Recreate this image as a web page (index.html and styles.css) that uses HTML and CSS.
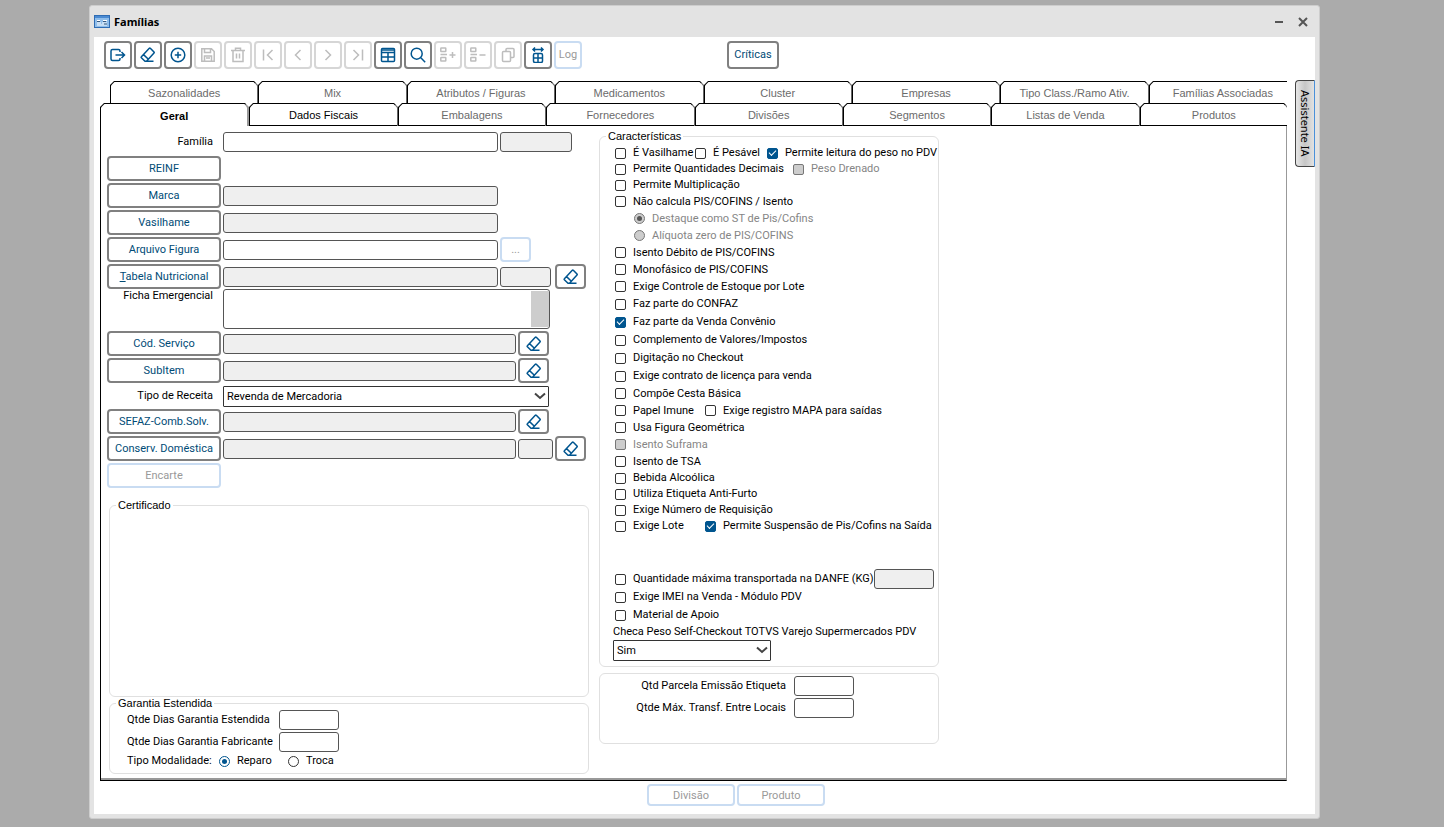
FILE: index.html
```html
<!DOCTYPE html>
<html lang="pt-BR">
<head>
<meta charset="utf-8">
<title>Famílias</title>
<meta name="viewport" content="width=device-width, initial-scale=1">
<link rel="stylesheet" href="styles.css">
</head>
<body>
<svg class="defs" width="0" height="0" aria-hidden="true">
  <symbol id="i-exit" viewBox="0 0 16 16"><path d="M10 5V4Q10 2.500 8.500 2.500H2.500Q1 2.500 1 4V12Q1 13.500 2.500 13.500H8.500Q10 13.500 10 12V11M5.500 8H14.500M11.500 5L14.500 8L11.500 11"/></symbol>
  <symbol id="i-eraser" viewBox="0 0 16 16"><path d="M10.300 1.200L14 5Q14.500 5.500 14 6L6.500 14.300H5L1.400 10.800Q.9 10.200 1.400 9.700L9.300 1.200Q9.800.7 10.300 1.200ZM3.500 7.600L8.400 12.200M5 14.300H13.500"/></symbol>
  <symbol id="i-plus" viewBox="0 0 16 16"><circle cx="8" cy="8" r="6.800"/><path d="M8 4.800V11.200M4.800 8H11.200"/></symbol>
  <symbol id="i-save" viewBox="0 0 16 16"><path d="M1.800 1.800H11.500L14.200 4.500V14.200H1.800ZM4.500 2V5.500H10.500V2M4.500 14V9H11.500V14M6 11H10"/></symbol>
  <symbol id="i-trash" viewBox="0 0 16 16"><path d="M1 3.500H15M5.500 3.200V1.300H10.500V3.200M3 3.800V14.500H13V3.800M6.500 6.500V11.500M9.500 6.500V11.500"/></symbol>
  <symbol id="i-first" viewBox="0 0 16 16"><path d="M3.500 2.500V13.500M12.500 3L7.500 8L12.500 13"/></symbol>
  <symbol id="i-prev" viewBox="0 0 16 16"><path d="M10.500 3L5.500 8L10.500 13"/></symbol>
  <symbol id="i-next" viewBox="0 0 16 16"><path d="M5.500 3L10.500 8L5.500 13"/></symbol>
  <symbol id="i-last" viewBox="0 0 16 16"><path d="M12.500 2.500V13.500M3.500 3L8.500 8L3.500 13"/></symbol>
  <symbol id="i-table" viewBox="0 0 16 16"><rect x="1.500" y="1.500" width="13" height="13" rx="1"/><path d="M1.500 3H14.500M1.500 5.500H14.500M1.500 10H14.500M8 5V14"/></symbol>
  <symbol id="i-search" viewBox="0 0 16 16"><circle cx="6.700" cy="6.700" r="5.500"/><path d="M10.800 10.800L15.200 15.200"/></symbol>
  <symbol id="i-rowadd" viewBox="0 0 16 16"><rect x=".8" y="1" width="5" height="3.500" rx=".5"/><path d="M.5 7.500H7M9.500 8H15.500M12.500 5V11"/><rect x=".8" y="10.500" width="5" height="3.500" rx=".5"/></symbol>
  <symbol id="i-rowdel" viewBox="0 0 16 16"><rect x=".8" y="1" width="5" height="3.500" rx=".5"/><path d="M.5 7.500H7M9.500 8H15.500"/><rect x=".8" y="10.500" width="5" height="3.500" rx=".5"/></symbol>
  <symbol id="i-copy" viewBox="0 0 16 16"><path d="M6 4V2.500Q6 1.500 7 1.500H13Q14 1.500 14 2.500V9.500Q14 10.500 13 10.500H11"/><rect x="2.500" y="4.500" width="8" height="10" rx="1"/></symbol>
  <symbol id="i-fit" viewBox="0 0 16 16"><path d="M3.500 2.500H12.500M5 .5L3 2.500L5 4.500M11 .5L13 2.500L11 4.500"/><rect x="3.500" y="6.500" width="9" height="9" rx="1.500"/><path d="M8 6.500V15.500M3.500 11H12.500"/></symbol>
</svg>

<main class="window">
  <header class="titlebar">
    <svg class="titlebar__icon" viewBox="0 0 16 13" aria-hidden="true">
      <rect x=".5" y=".5" width="15" height="12" fill="#8fbdea" stroke="#2f6cb3"/>
      <path d="M1 2H15" stroke="#4a8ad2" stroke-width="2"/>
      <path d="M3 5.500H6M3 8H7M9 5.500H13M8 8H13M3 10H13" stroke="#fff"/>
      <path d="M3 6.500H6M9 6.500H12M10 9H13" stroke="#35587f"/>
    </svg>
    <h1 class="titlebar__title">Famílias</h1>
    <button class="winbtn" aria-label="Minimizar"><svg viewBox="0 0 10 10"><path d="M1 5H9"/></svg></button>
    <button class="winbtn" aria-label="Fechar"><svg viewBox="0 0 10 10"><path d="M1 1L9 9M9 1L1 9"/></svg></button>
  </header>

  <div class="content">
    <div class="workspace">
      <div class="toolbar">
        <button class="tool" aria-label="Sair"><svg><use href="#i-exit"/></svg></button>
        <button class="tool" aria-label="Limpar"><svg><use href="#i-eraser"/></svg></button>
        <button class="tool" aria-label="Incluir"><svg><use href="#i-plus"/></svg></button>
        <button class="tool" disabled aria-label="Salvar"><svg><use href="#i-save"/></svg></button>
        <button class="tool" disabled aria-label="Excluir"><svg><use href="#i-trash"/></svg></button>
        <button class="tool" disabled aria-label="Primeiro"><svg><use href="#i-first"/></svg></button>
        <button class="tool" disabled aria-label="Anterior"><svg><use href="#i-prev"/></svg></button>
        <button class="tool" disabled aria-label="Próximo"><svg><use href="#i-next"/></svg></button>
        <button class="tool" disabled aria-label="Último"><svg><use href="#i-last"/></svg></button>
        <button class="tool" aria-label="Tabela"><svg><use href="#i-table"/></svg></button>
        <button class="tool" aria-label="Pesquisar"><svg><use href="#i-search"/></svg></button>
        <button class="tool" disabled aria-label="Inserir linha"><svg><use href="#i-rowadd"/></svg></button>
        <button class="tool" disabled aria-label="Remover linha"><svg><use href="#i-rowdel"/></svg></button>
        <button class="tool" disabled aria-label="Copiar"><svg><use href="#i-copy"/></svg></button>
        <button class="tool" aria-label="Ajustar colunas"><svg><use href="#i-fit"/></svg></button>
        <button class="tool tool--text" disabled>Log</button>
        <button class="tool tool--wide">Críticas</button>
      </div>

      <div class="tabs" role="tablist">
        <div class="tabs__row tabs__row--back">
          <button class="tab" role="tab">Sazonalidades</button>
          <button class="tab" role="tab">Mix</button>
          <button class="tab" role="tab">Atributos / Figuras</button>
          <button class="tab" role="tab">Medicamentos</button>
          <button class="tab" role="tab">Cluster</button>
          <button class="tab" role="tab">Empresas</button>
          <button class="tab" role="tab">Tipo Class./Ramo Ativ.</button>
          <button class="tab" role="tab">Famílias Associadas</button>
        </div>
        <div class="tabs__row tabs__row--front">
          <button class="tab tab--selected" role="tab" aria-selected="true">Geral</button>
          <button class="tab tab--enabled" role="tab">Dados Fiscais</button>
          <button class="tab" role="tab">Embalagens</button>
          <button class="tab" role="tab">Fornecedores</button>
          <button class="tab" role="tab">Divisões</button>
          <button class="tab" role="tab">Segmentos</button>
          <button class="tab" role="tab">Listas de Venda</button>
          <button class="tab" role="tab">Produtos</button>
        </div>
      </div>

      <section class="panel">
        <div class="left">
          <div class="form">
            <div class="row"><label class="row__label" for="familia">Família</label><input class="field field--m" id="familia"><input class="field field--code" disabled aria-label="Código da família"></div>
            <div class="row"><button class="btn">REINF</button></div>
            <div class="row"><button class="btn">Marca</button><input class="field field--m" disabled aria-label="Marca"></div>
            <div class="row"><button class="btn">Vasilhame</button><input class="field field--m" disabled aria-label="Vasilhame"></div>
            <div class="row"><button class="btn">Arquivo Figura</button><input class="field field--m" aria-label="Arquivo Figura"><button class="btn btn--icon" disabled>...</button></div>
            <div class="row"><button class="btn"><u>T</u>abela Nutricional</button><input class="field field--m" disabled aria-label="Tabela Nutricional"><input class="field field--s" disabled aria-label="Código da tabela"><button class="btn btn--icon btn--end" aria-label="Limpar tabela"><svg><use href="#i-eraser"/></svg></button></div>
            <div class="row row--memo"><label class="row__label" for="ficha">Ficha Emergencial</label><div class="memo"><textarea class="memo__text" id="ficha"></textarea><span class="memo__bar"></span></div></div>
            <div class="row"><button class="btn">Cód. Serviço</button><input class="field field--l" disabled aria-label="Serviço"><button class="btn btn--icon" aria-label="Limpar serviço"><svg><use href="#i-eraser"/></svg></button></div>
            <div class="row"><button class="btn">SubItem</button><input class="field field--l" disabled aria-label="SubItem"><button class="btn btn--icon" aria-label="Limpar subitem"><svg><use href="#i-eraser"/></svg></button></div>
            <div class="row row--select"><label class="row__label" for="receita">Tipo de Receita</label><div class="combo combo--wide"><select id="receita"><option>Revenda de Mercadoria</option></select><svg viewBox="0 0 12 8"><path d="M1 1.500L6 6L11 1.500"/></svg></div></div>
            <div class="row"><button class="btn">SEFAZ-Comb.Solv.</button><input class="field field--l" disabled aria-label="SEFAZ"><button class="btn btn--icon" aria-label="Limpar SEFAZ"><svg><use href="#i-eraser"/></svg></button></div>
            <div class="row"><button class="btn">Conserv. Doméstica</button><input class="field field--l" disabled aria-label="Conservação"><input class="field field--xs" disabled aria-label="Código da conservação"><button class="btn btn--icon" aria-label="Limpar conservação"><svg><use href="#i-eraser"/></svg></button></div>
            <div class="row"><button class="btn" disabled>Encarte</button></div>
          </div>
          <fieldset class="group group--cert"><legend>Certificado</legend></fieldset>
          <fieldset class="group group--warranty"><legend>Garantia Estendida</legend>
            <div class="warranty">
              <label for="dias-est">Qtde Dias Garantia Estendida</label><input class="field field--n" id="dias-est">
              <label for="dias-fab">Qtde Dias Garantia Fabricante</label><input class="field field--n" id="dias-fab">
            </div>
            <div class="modality"><span>Tipo Modalidade:</span>
              <label class="check"><input type="radio" name="modalidade" checked>Reparo</label>
              <label class="check"><input type="radio" name="modalidade">Troca</label>
            </div>
          </fieldset>
        </div>

        <div class="right">
          <fieldset class="group group--traits"><legend>Características</legend>
            <div class="checks checks--tight">
              <div class="line"><label class="check w-a"><input type="checkbox">É Vasilhame</label><label class="check w-b"><input type="checkbox">É Pesável</label><label class="check"><input type="checkbox" checked>Permite leitura do peso no PDV</label></div>
              <div class="line"><label class="check w-d"><input type="checkbox">Permite Quantidades Decimais</label><label class="check check--off"><input type="checkbox" disabled>Peso Drenado</label></div>
              <div class="line"><label class="check"><input type="checkbox">Permite Multiplicação</label></div>
            </div>
            <div class="checks">
              <div class="line"><label class="check"><input type="checkbox">Não calcula PIS/COFINS / Isento</label></div>
              <div class="line line--sub"><label class="check check--off"><input type="radio" name="pis" checked disabled>Destaque como ST de Pis/Cofins</label></div>
              <div class="line line--sub"><label class="check check--off"><input type="radio" name="pis" disabled>Alíquota zero de PIS/COFINS</label></div>
              <div class="line"><label class="check"><input type="checkbox">Isento Débito de PIS/COFINS</label></div>
              <div class="line"><label class="check"><input type="checkbox">Monofásico de PIS/COFINS</label></div>
              <div class="line"><label class="check"><input type="checkbox">Exige Controle de Estoque por Lote</label></div>
            </div>
            <div class="checks checks--loose">
              <div class="line"><label class="check"><input type="checkbox">Faz parte do CONFAZ</label></div>
              <div class="line"><label class="check"><input type="checkbox" checked>Faz parte da Venda Convênio</label></div>
              <div class="line"><label class="check"><input type="checkbox">Complemento de Valores/Impostos</label></div>
              <div class="line"><label class="check"><input type="checkbox">Digitação no Checkout</label></div>
              <div class="line"><label class="check"><input type="checkbox">Exige contrato de licença para venda</label></div>
            </div>
            <div class="checks">
              <div class="line"><label class="check"><input type="checkbox">Compõe Cesta Básica</label></div>
              <div class="line"><label class="check w-c"><input type="checkbox">Papel Imune</label><label class="check"><input type="checkbox">Exige registro MAPA para saídas</label></div>
              <div class="line"><label class="check"><input type="checkbox">Usa Figura Geométrica</label></div>
              <div class="line"><label class="check check--off"><input type="checkbox" disabled>Isento Suframa</label></div>
              <div class="line"><label class="check"><input type="checkbox">Isento de TSA</label></div>
            </div>
            <div class="checks checks--tight">
              <div class="line"><label class="check"><input type="checkbox">Bebida Alcoólica</label></div>
              <div class="line"><label class="check"><input type="checkbox">Utiliza Etiqueta Anti-Furto</label></div>
              <div class="line"><label class="check"><input type="checkbox">Exige Número de Requisição</label></div>
              <div class="line"><label class="check w-c"><input type="checkbox">Exige Lote</label><label class="check"><input type="checkbox" checked>Permite Suspensão de Pis/Cofins na Saída</label></div>
            </div>
            <div class="checks checks--loose checks--last">
              <div class="line line--spread"><label class="check"><input type="checkbox">Quantidade máxima transportada na DANFE (KG)</label><input class="field field--n" disabled aria-label="Quantidade máxima"></div>
              <div class="line"><label class="check"><input type="checkbox">Exige IMEI na Venda - Módulo PDV</label></div>
              <div class="line"><label class="check"><input type="checkbox">Material de Apoio</label></div>
            </div>
            <div class="scale">
              <label class="scale__label" for="checa">Checa Peso Self-Checkout TOTVS Varejo Supermercados PDV</label>
              <div class="combo"><select id="checa"><option>Sim</option></select><svg viewBox="0 0 12 8"><path d="M1 1.500L6 6L11 1.500"/></svg></div>
            </div>
          </fieldset>
          <div class="group group--limits">
            <label for="parcela">Qtd Parcela Emissão Etiqueta</label><input class="field field--n" id="parcela">
            <label for="transf">Qtde Máx. Transf. Entre Locais</label><input class="field field--n" id="transf">
          </div>
        </div>
      </section>

      <footer class="footer">
        <button class="btn btn--footer" disabled>Divisão</button>
        <button class="btn btn--footer" disabled>Produto</button>
      </footer>
    </div>
    <aside class="side"><button class="assistant">Assistente IA</button></aside>
  </div>
</main>
</body>
</html>
```
FILE: styles.css
```css
* { box-sizing: border-box; }

body {
  margin: 0;
  padding: 5px 124px 8px 89px;
  min-height: 100vh;
  display: flex;
  flex-direction: column;
  background: #ababab;
  color: #000;
  font: 11px/14px Roboto, "Liberation Sans", sans-serif;
}

button, input, select, textarea { font: inherit; color: inherit; margin: 0; }
.defs { position: absolute; }

/* window frame */
.window {
  flex: 1;
  display: flex;
  flex-direction: column;
  padding: 0 4px 4px;
  background: #e3e3e3;
  border: 1px solid #cdcdcd;
  border-radius: 3px;
}
.titlebar { display: flex; align-items: center; height: 31px; }
.titlebar__icon { width: 16px; height: 13px; }
.titlebar__title {
  flex: 1;
  margin: 0 0 0 4px;
  font: 700 11px/16px "Noto Sans", sans-serif;
}
.winbtn { width: 24px; height: 24px; padding: 0; border: 0; background: none; }
.winbtn svg { display: block; margin: 7px auto; width: 10px; height: 10px; fill: none; stroke: #555; stroke-width: 2; }

.content { flex: 1; display: flex; background: #fff; }
.workspace { flex: 1; min-width: 0; display: flex; flex-direction: column; padding: 4px 0 8px 6px; }

/* toolbar */
.toolbar { display: flex; gap: 2px; padding-left: 4px; }
.tool {
  width: 28px;
  height: 28px;
  padding: 0;
  display: grid;
  place-items: center;
  background: #fff;
  border: 2px solid #808080;
  border-radius: 4px;
  color: #00558f;
}
.tool svg { width: 16px; height: 16px; }
.tool svg, .btn svg { fill: none; stroke: currentColor; stroke-width: 1.5; }
.tool:disabled { border-color: #d6d6d6; color: #bdbdbd; }
.tool--text:disabled { border-color: #c9dcf2; color: #999; }
.tool--wide { width: 52px; margin-left: 143px; color: #004b76; }

/* tabs */
.tabs { margin-top: 12px; }
.tabs__row { display: flex; height: 22px; overflow: hidden; }
.tabs__row--back .tab:first-child { margin-left: 10px; }
.tab {
  flex: 0 0 12.5%;
  padding: 1px 0 0;
  background: #fff;
  border: 1px solid #000;
  border-right-color: #666;
  border-bottom: 0;
  border-radius: 4px 4px 0 0;
  corner-shape: bevel;
  color: #6b6b6b;
  font: 11px/14px "Liberation Sans", Arial, sans-serif;
}
.tabs__row--front { height: 23px; }
.tabs__row--front .tab { border-bottom: 1px solid #000; }
.tabs__row--front .tab--enabled { color: #000; }
.tabs__row--front .tab--selected { flex-basis: calc(12.5% + 1px); color: #000; font-weight: 700; border-bottom: 0; border-right: 2px solid #999; }

/* page body */
.panel {
  flex: 1;
  display: flex;
  align-items: flex-start;
  gap: 10px;
  padding: 3px 6px 5px;
  border-left: 1px solid #000;
  border-right: 1px solid #999;
  border-bottom: 1px solid #000;
  box-shadow: inset 0 -2px #999;
}
.left { width: 482px; }
.right { width: 340px; }

.form { display: flex; flex-direction: column; gap: 2px; }
.row { display: flex; align-items: center; gap: 2px; height: 25px; }
.row--memo { height: 40px; margin-top: -2px; align-items: flex-start; }
.row--select { height: 22px; }
.row__label { width: 114px; padding-right: 8px; text-align: right; }

.btn {
  width: 114px;
  height: 25px;
  padding: 1px 0 0;
  background: #fff;
  border: 2px solid #808080;
  border-radius: 4px;
  color: #004b76;
}
.btn:disabled { border-color: #c9dcf2; color: #999; }
.btn--icon { width: 31px; padding: 0; display: grid; place-items: center; }
.btn--icon svg { width: 16px; height: 16px; color: #00558f; }
.btn--end { margin-left: 2px; }
.btn--footer { width: 88px; height: 22px; }

.field {
  height: 20px;
  padding: 0 3px;
  background: #fff;
  border: 1px solid #555;
  border-radius: 3px;
}
.field:disabled { background: #efefef; }
.field--m { width: 275px; }
.field--l { width: 293px; }
.field--code { width: 72px; }
.field--s { width: 51px; }
.field--xs { width: 35px; }
.field--n { width: 60px; }

.memo { display: flex; width: 327px; height: 40px; padding: 1px 0; border: 1px solid #555; border-radius: 3px; }
.memo__text { flex: 1; min-width: 0; border: 0; padding: 0 3px; resize: none; background: none; }
.memo__bar { width: 18px; background: #cdcdcd; }

.combo { position: relative; width: 158px; }
.combo--wide { width: 326px; }
.combo select {
  display: block;
  appearance: none;
  width: 100%;
  height: 21px;
  padding: 1px 3px 0;
  background: #fff;
  border: 1px solid #333;
  border-radius: 1px;
}
.combo svg { position: absolute; right: 3px; top: 6px; width: 12px; height: 8px; fill: none; stroke: #444; stroke-width: 2; pointer-events: none; }

/* group boxes */
.group { min-width: 0; margin: 0; padding: 0; border: 1px solid #e0e0e0; border-radius: 6px; }
.group legend { margin-left: 6px; padding: 0 2px; font: 11px/13px "Liberation Sans", Arial, sans-serif; }
.group--cert { height: 198px; margin: 11px 0 0 2px; }
.group--warranty { margin-left: 2px; padding-bottom: 3px; }
.warranty { display: grid; grid-template-columns: 152px 60px; align-items: center; row-gap: 2px; padding-left: 17px; }
.modality { display: flex; align-items: center; height: 18px; padding-left: 17px; }
.modality span { width: 92px; }
.modality .check { width: 69px; }

.group--traits { margin-top: 1px; padding: 2px 6px 5px 7px; }
.group--traits legend { margin-left: -1px; }
.checks { padding-left: 8px; --line: 17px; }
.checks--tight { --line: 16px; }
.checks--loose { --line: 18px; }
.checks--last { margin-top: 36px; }
.line { display: flex; align-items: center; height: var(--line); }
.line--sub { padding-left: 19px; }
.line--spread { justify-content: space-between; }

.check { display: flex; flex: none; align-items: center; gap: 7px; white-space: nowrap; }
.check--off { color: #858585; }
.w-a { width: 80px; }
.w-b { width: 72px; }
.w-c { width: 90px; }
.w-d { width: 178px; }

.check input { appearance: none; flex: none; display: grid; place-items: center; width: 11px; height: 11px; border: 1px solid #333; border-radius: 2px; background: #fff; }
.check input:disabled { background: #cdcdcd; border-color: #777; }
.check input[type="checkbox"]:checked { background: #00558f; border-color: #00558f; }
.check input[type="checkbox"]:checked::before { content: ""; width: 6px; height: 3px; margin-top: -2px; border: solid #fff; border-width: 0 0 1px 1px; transform: rotate(-45deg); }
.check input[type="radio"] { border-radius: 50%; }
.check input[type="radio"]:checked::before { content: ""; width: 5px; height: 5px; border-radius: 50%; background: #00558f; }
.check input[type="radio"]:checked:enabled { border-color: #00558f; }
.check input[type="radio"]:checked:disabled::before { background: #555; }

.scale { padding-left: 6px; }
.scale__label { display: block; line-height: 16px; }

.group--limits {
  display: grid;
  grid-template-columns: 1fr 60px;
  align-content: start;
  align-items: center;
  gap: 2px 8px;
  height: 71px;
  margin-top: 6px;
  padding: 2px 84px 0 0;
  text-align: right;
}

.footer { display: flex; gap: 2px; padding: 3px 0 0 547px; }

/* side tab */
.side { width: 28px; padding: 43px 0 0 8px; }
.assistant {
  width: 20px;
  height: 87px;
  padding: 0;
  writing-mode: vertical-rl;
  background: linear-gradient(90deg, #e6e6e6, #c6c6c6 50%, #e2e2e2);
  border: 1px solid #444;
  border-right: 1px solid #4a90d9;
  border-radius: 4px 0 0 4px;
  font: 11px/18px "Noto Sans", sans-serif;
}
```
